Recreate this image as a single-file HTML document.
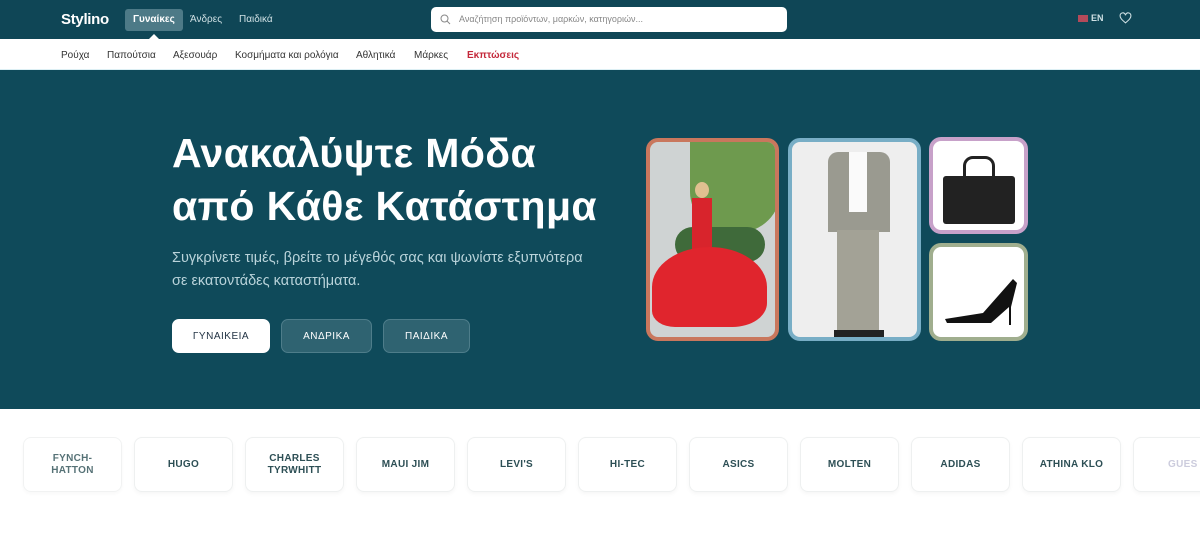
<!DOCTYPE html>
<html><head><meta charset="utf-8"><style>
*{margin:0;padding:0;box-sizing:border-box}
body{width:1200px;height:559px;overflow:hidden;background:#fff;font-family:"Liberation Sans","DejaVu Sans",sans-serif}
.top{height:39px;background:#0f4656;position:relative;color:#fff}
.logo{position:absolute;left:61px;top:11px;font-size:15px;font-weight:bold;letter-spacing:-0.3px}
.tab{position:absolute;top:9px;height:22px;font-size:10px;line-height:22px;padding:0 8px;color:#cfe0e4}
.tab.on{background:#4d7a87;color:#fff;border-radius:3px;font-weight:bold}
.search{position:absolute;left:431px;top:7px;width:356px;height:25px;background:#fff;border-radius:5px;font-size:9px;color:#888;line-height:25px;padding-left:28px}
.sub{height:31px;background:#fff;border-bottom:1px solid #dceff4;position:relative;font-size:10px;color:#333}
.sub span{position:absolute;top:11px}
.hero{height:339px;background:#0f4a5a;position:relative}
h1{position:absolute;left:172px;top:57px;color:#fff;font-size:41px;line-height:53px;font-weight:bold;letter-spacing:0.4px}
.p{position:absolute;left:172px;top:177px;color:#b9d3da;font-size:14.5px;line-height:23px}
.btn{position:absolute;top:249px;height:34px;border-radius:7px;font-size:10px;letter-spacing:0.5px;line-height:34px;text-align:center;color:#fff;background:#2f6371;border:1px solid #4e7d8a}
.card{position:absolute;border-radius:12px;border:4px solid;overflow:hidden;background:#f3f3f3}
.brands{position:relative;height:150px}
.b{position:absolute;top:28px;width:99px;height:55px;border:1px solid #eef0f0;border-radius:8px;box-shadow:0 2px 4px rgba(0,0,0,0.04);font-size:10px;font-weight:bold;color:#2d4f55;text-align:center;display:flex;align-items:center;justify-content:center;line-height:12px;letter-spacing:0.3px}
</style></head><body>
<div class="top">
<div class="logo">Stylino</div>
<div class="tab on" style="left:125px">Γυναίκες</div>
<div style="position:absolute;left:149px;width:0;height:0;border:5px solid transparent;border-bottom-color:#fff;border-top:0;top:34px"></div>
<div class="tab" style="left:182px">Άνδρες</div>
<div class="tab" style="left:231px">Παιδικά</div>
<div class="search"><svg style="position:absolute;left:9px;top:7px" width="11" height="11" viewBox="0 0 11 11"><circle cx="4.5" cy="4.5" r="3.5" stroke="#888" fill="none"/><path d="M7 7l3 3" stroke="#888"/></svg>Αναζήτηση προϊόντων, μαρκών, κατηγοριών...</div>
<div style="position:absolute;left:1078px;top:15px;width:10px;height:7px;background:#b44a5a"></div>
<div style="position:absolute;left:1091px;top:13px;font-size:9px;font-weight:bold;color:#cfe0e4">EN</div>
<svg style="position:absolute;left:1119px;top:12px" width="13" height="12" viewBox="0 0 24 22"><path d="M12 20C5 14 2 11 2 7a5 5 0 0 1 10-1 5 5 0 0 1 10 1c0 4-3 7-10 13z" fill="none" stroke="#cfe0e4" stroke-width="2"/></svg>
</div>
<div class="sub">
<span style="left:61px">Ρούχα</span><span style="left:107px">Παπούτσια</span><span style="left:173px">Αξεσουάρ</span><span style="left:235px">Κοσμήματα και ρολόγια</span><span style="left:356px">Αθλητικά</span><span style="left:414px">Μάρκες</span><span style="left:467px;color:#c4283a;font-weight:bold">Εκπτώσεις</span>
</div>
<div class="hero">
<h1>Ανακαλύψτε Μόδα<br>από Κάθε Κατάστημα</h1>
<div class="p">Συγκρίνετε τιμές, βρείτε το μέγεθός σας και ψωνίστε εξυπνότερα<br>σε εκατοντάδες καταστήματα.</div>
<div class="btn" style="left:172px;width:98px;background:#fff;color:#234;border-color:#fff">ΓΥΝΑΙΚΕΙΑ</div>
<div class="btn" style="left:281px;width:91px">ΑΝΔΡΙΚΑ</div>
<div class="btn" style="left:383px;width:87px">ΠΑΙΔΙΚΑ</div>
<div class="card" style="left:646px;top:68px;width:133px;height:203px;border-color:#c9775d;background:#cfd3d3">
 <div style="position:absolute;left:40px;top:0;width:90px;height:90px;background:#6e9a4e;border-radius:0 0 40px 40px"></div>
 <div style="position:absolute;left:25px;top:85px;width:90px;height:35px;background:#3f6a3a;border-radius:20px"></div>
 <div style="position:absolute;left:45px;top:40px;width:14px;height:16px;background:#e0c090;border-radius:50%"></div>
 <div style="position:absolute;left:42px;top:56px;width:20px;height:60px;background:#d8242c"></div>
 <div style="position:absolute;left:2px;top:105px;width:115px;height:80px;background:#e0252d;border-radius:50% 50% 30% 20%"></div>
</div>
<div class="card" style="left:788px;top:68px;width:133px;height:203px;border-color:#78aec6;background:#eeeeee">
 <div style="position:absolute;left:36px;top:10px;width:62px;height:80px;background:#9a9a90;border-radius:10px 10px 0 0"></div>
 <div style="position:absolute;left:57px;top:10px;width:18px;height:60px;background:#fafafa"></div>
 <div style="position:absolute;left:45px;top:88px;width:42px;height:105px;background:#a3a296"></div>
 <div style="position:absolute;left:42px;top:188px;width:50px;height:8px;background:#222"></div>
</div>
<div class="card" style="left:929px;top:67px;width:99px;height:97px;border-color:#c7a1c9;background:#fff">
 <div style="position:absolute;left:10px;top:35px;width:72px;height:48px;background:#222;border-radius:3px"></div>
 <div style="position:absolute;left:30px;top:15px;width:32px;height:28px;border:3px solid #222;border-radius:10px 10px 0 0"></div>
</div>
<div class="card" style="left:929px;top:173px;width:99px;height:98px;border-color:#a0ae8e;background:#fff">
 <svg width="91" height="90" viewBox="0 0 91 90"><path d="M12 72 L50 66 L80 32 L84 36 L78 60 L78 78 L76 78 L76 60 L58 76 L14 76Z" fill="#111"/></svg>
</div>
</div>
<div class="brands">
<div class="b" style="left:23px;opacity:.8">FYNCH-<br>HATTON</div>
<div class="b" style="left:134px">HUGO</div>
<div class="b" style="left:245px">CHARLES<br>TYRWHITT</div>
<div class="b" style="left:356px">MAUI JIM</div>
<div class="b" style="left:467px">LEVI'S</div>
<div class="b" style="left:578px">HI-TEC</div>
<div class="b" style="left:689px">ASICS</div>
<div class="b" style="left:800px">MOLTEN</div>
<div class="b" style="left:911px">ADIDAS</div>
<div class="b" style="left:1022px">ATHINA KLO</div>
<div class="b" style="left:1133px;color:#ccd;justify-content:flex-start;padding-left:34px">GUES</div>
</div>
</body></html>
